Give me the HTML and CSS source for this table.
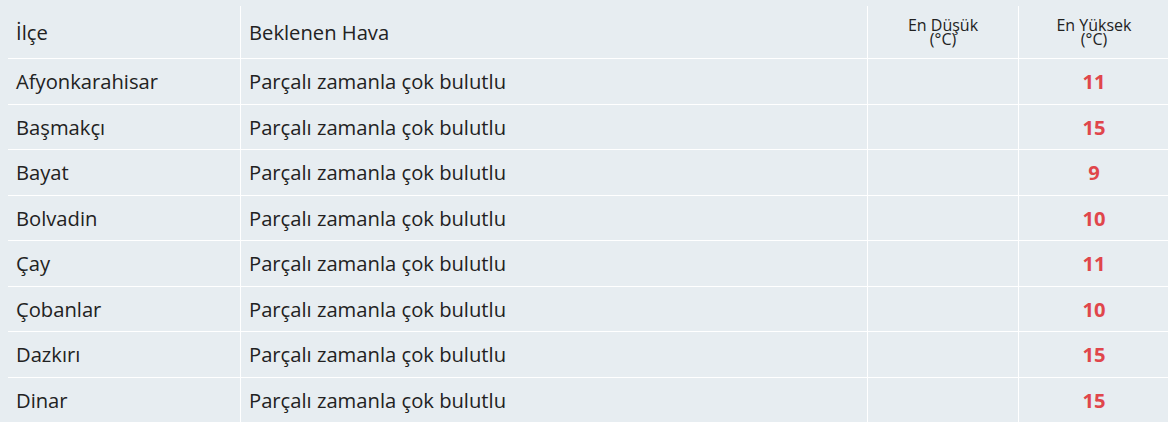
FILE: index.html
```html
<!DOCTYPE html>
<html lang="tr">
<head>
<meta charset="utf-8">
<title>Hava Durumu</title>
<link rel="stylesheet" href="styles.css">
</head>
<body>
<table class="weather">
  <thead>
    <tr class="head-row">
      <th class="c-name">İlçe</th>
      <th class="c-desc">Beklenen Hava</th>
      <th class="c-num small">En Düşük<br>(°C)</th>
      <th class="c-num small">En Yüksek<br>(°C)</th>
    </tr>
  </thead>
  <tbody>
    <tr><td class="c-name">Afyonkarahisar</td><td class="c-desc">Parçalı zamanla çok bulutlu</td><td class="c-num"></td><td class="c-num hi">11</td></tr>
    <tr><td class="c-name">Başmakçı</td><td class="c-desc">Parçalı zamanla çok bulutlu</td><td class="c-num"></td><td class="c-num hi">15</td></tr>
    <tr><td class="c-name">Bayat</td><td class="c-desc">Parçalı zamanla çok bulutlu</td><td class="c-num"></td><td class="c-num hi">9</td></tr>
    <tr><td class="c-name">Bolvadin</td><td class="c-desc">Parçalı zamanla çok bulutlu</td><td class="c-num"></td><td class="c-num hi">10</td></tr>
    <tr><td class="c-name">Çay</td><td class="c-desc">Parçalı zamanla çok bulutlu</td><td class="c-num"></td><td class="c-num hi">11</td></tr>
    <tr><td class="c-name">Çobanlar</td><td class="c-desc">Parçalı zamanla çok bulutlu</td><td class="c-num"></td><td class="c-num hi">10</td></tr>
    <tr><td class="c-name">Dazkırı</td><td class="c-desc">Parçalı zamanla çok bulutlu</td><td class="c-num"></td><td class="c-num hi">15</td></tr>
    <tr><td class="c-name">Dinar</td><td class="c-desc">Parçalı zamanla çok bulutlu</td><td class="c-num"></td><td class="c-num hi">15</td></tr>
  </tbody>
</table>
</body>
</html>
```
FILE: styles.css
```css
html, body {
  margin: 0;
  padding: 0;
  background: #e7edf1;
}
body {
  padding: 6px 0 0 8px;
  font-family: "Open Sans", "Liberation Sans", sans-serif;
  color: #222;
  overflow: hidden;
}
.weather {
  width: 1160px;
  border-collapse: separate;
  border-spacing: 0;
  table-layout: fixed;
  font-size: 20.2px;
}
.weather th, .weather td {
  border-bottom: 1px solid #ffffff;
  border-left: 1px solid #ffffff;
  padding: 0 8px;
  vertical-align: middle;
  text-align: left;
  font-weight: normal;
}
.weather th:first-child, .weather td:first-child {
  border-left: none;
}
.head-row {
  height: 53px;
}
tbody tr {
  height: 45.5px;
}
.c-name { width: 216px; }
.c-desc { width: 610px; }
.weather .c-num {
  width: 134px;
  text-align: center;
}
.weather th.small {
  font-size: 16px;
  line-height: 14.5px;
  padding-top: 0;
}
.weather td.hi {
  color: #e0464b;
  font-weight: bold;
}
```
